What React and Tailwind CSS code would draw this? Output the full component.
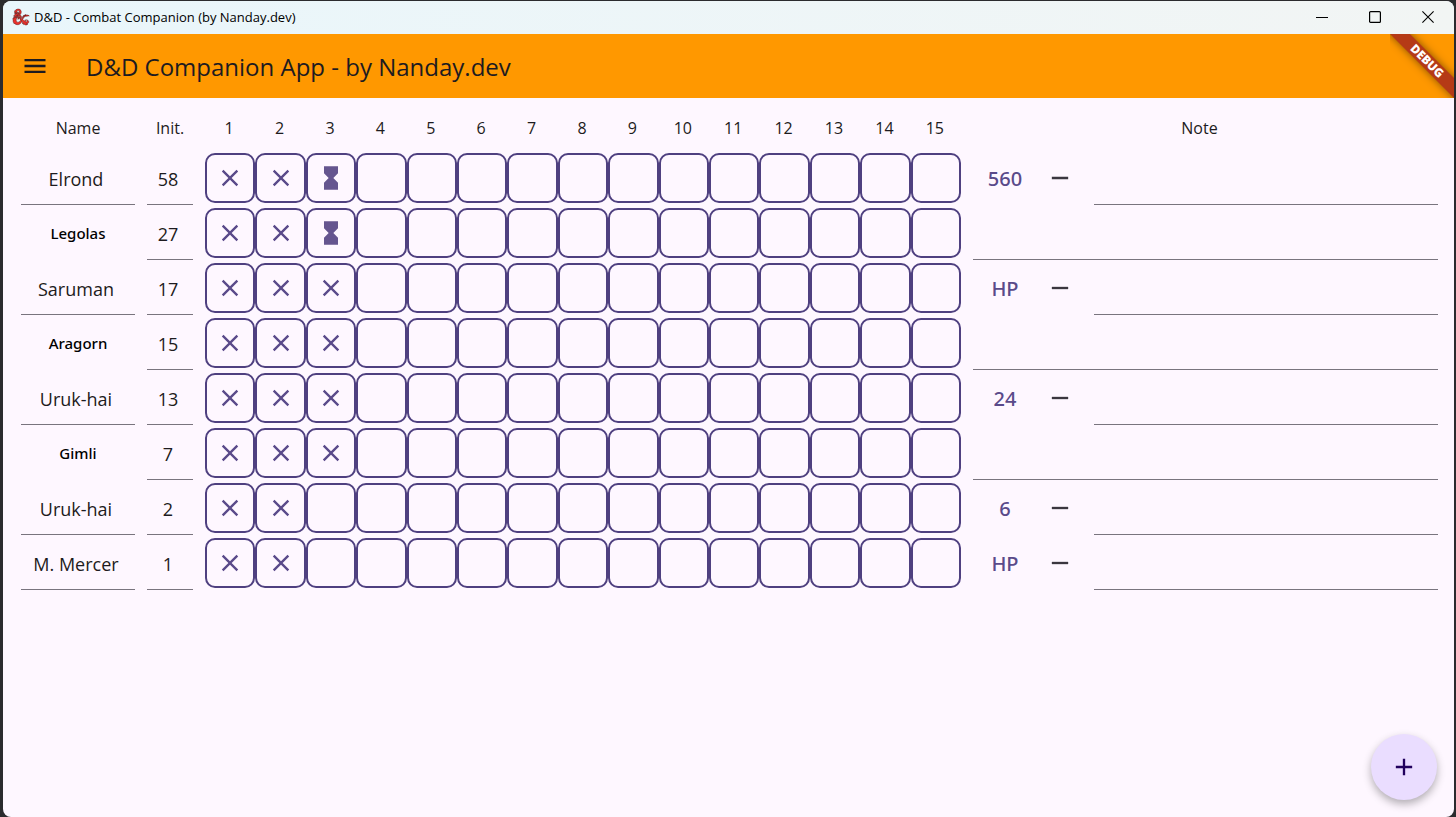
import { useState } from "react";
import { FaDAndD } from "react-icons/fa6";
import { MdAdd, MdClose, MdHourglassFull, MdMenu, MdRemove } from "react-icons/md";

const ROUNDS = Array.from({ length: 15 }, (_, i) => i + 1);
const COLUMNS = "grid grid-cols-[1260fr_580fr_repeat(15,504fr)_1330fr_3440fr]";

const FIGHTERS = [
  { name: "Elrond", init: 58, marks: ["x", "x", "wait"], hp: "560" },
  { name: "Legolas", init: 27, marks: ["x", "x", "wait"], hero: true },
  { name: "Saruman", init: 17, marks: ["x", "x", "x"], hp: "HP" },
  { name: "Aragorn", init: 15, marks: ["x", "x", "x"], hero: true },
  { name: "Uruk-hai", init: 13, marks: ["x", "x", "x"], hp: "24" },
  { name: "Gimli", init: 7, marks: ["x", "x", "x"], hero: true },
  { name: "Uruk-hai", init: 2, marks: ["x", "x"], hp: "6" },
  { name: "M. Mercer", init: 1, marks: ["x", "x"], hp: "HP" },
];

const NEXT_MARK = { "": "x", x: "wait", wait: "" };

function TitleBar() {
  return (
    <div className="flex h-[33px] items-center justify-between bg-linear-to-r from-[#e9f6fb] to-[#f2f5f4] pl-[9px] text-black">
      <div className="flex items-center gap-1 pb-[2px]">
        <FaDAndD className="size-[18px] overflow-visible fill-[#e8302c] stroke-[#5a1414] stroke-[14]" />
        <span className="text-[13px] leading-4">D&amp;D - Combat Companion (by Nanday.dev)</span>
      </div>
      <div className="flex h-full pb-[2px]">
        <button aria-label="Minimize" className="grid w-[53px] place-items-center">
          <svg className="size-3" viewBox="0 0 12 12" fill="none" stroke="currentColor">
            <path d="M0 6.5h12" />
          </svg>
        </button>
        <button aria-label="Maximize" className="grid w-[53px] place-items-center">
          <svg className="size-3" viewBox="0 0 12 12" fill="none" stroke="currentColor" strokeWidth="1.2">
            <rect x="0.6" y="0.6" width="10.8" height="10.8" rx="1" />
          </svg>
        </button>
        <button aria-label="Close" className="grid w-[53px] place-items-center">
          <svg className="size-3" viewBox="0 0 12 12" fill="none" stroke="currentColor" strokeWidth="1.1">
            <path d="M0.4 0.4l11.2 11.2M11.6 0.4L0.4 11.6" />
          </svg>
        </button>
      </div>
    </div>
  );
}

function AppBar() {
  return (
    <header className="relative flex h-16 items-center gap-[37px] bg-[#ff9800] pl-[18px] text-[#1d1b20]">
      <button aria-label="Open menu">
        <MdMenu className="size-7" />
      </button>
      <h1 className="pt-[2px] text-[24px] leading-8">D&amp;D Companion App - by Nanday.dev</h1>
      <div className="absolute top-0 right-0 size-16 overflow-hidden">
        <div className="absolute top-5 -left-[13px] h-[14px] w-[100px] rotate-45 bg-[#b53a16] text-center text-[12px] leading-[14px] font-black text-white shadow-[0_0_8px_rgba(0,0,0,0.5)]">
          DEBUG
        </div>
      </div>
    </header>
  );
}

function RoundCell({ fighter, round, initial }) {
  const [mark, setMark] = useState(initial);
  return (
    <button
      aria-label={`${fighter}, round ${round}`}
      onClick={() => setMark(NEXT_MARK[mark])}
      className="grid h-[50px] w-full place-items-center rounded-[10px] border-2 border-[#4f4080] text-[#5a4a8a]"
    >
      {mark === "x" && <MdClose className="size-7" />}
      {mark === "wait" && <MdHourglassFull className="size-7 text-[#65558f]" />}
    </button>
  );
}

const FIELD = "h-[55px] w-full min-w-0 border-b border-[#79747e] bg-transparent text-[18px] text-[#1d1b20] outline-none";

function FighterRow({ name, init, marks, hp, hero }) {
  return (
    <tr className={COLUMNS}>
      <td className="min-w-0 pr-3">
        {hero ? (
          <span className="flex h-[55px] items-center justify-center pt-[2px] font-['Noto_Sans',sans-serif] text-[15px] font-medium text-black">{name}</span>
        ) : (
          <input aria-label="Name" defaultValue={name} className={`${FIELD} pt-1 pr-1 text-center`} />
        )}
      </td>
      <td className="min-w-0 pr-3">
        <input aria-label={`${name} initiative`} defaultValue={init} className={`${FIELD} pt-1 pr-1 text-center`} />
      </td>
      {ROUNDS.map((round, i) => (
        <td key={round} className="min-w-0 pt-[3px]">
          <RoundCell fighter={name} round={round} initial={marks[i] || ""} />
        </td>
      ))}
      {!hero && (
        <td className="flex min-w-0 items-center pl-3">
          <button className="h-10 w-16 pt-[2px] font-['Noto_Sans',sans-serif] text-[20px] font-medium text-[#5a4a8a]">{hp}</button>
          <button aria-label={`Reduce ${name} hit points`} className="grid h-10 w-[46px] place-items-center text-[#3a363f]">
            <MdRemove className="size-7" />
          </button>
        </td>
      )}
      <td className={hero ? "col-span-2 min-w-0 pl-3" : "min-w-0"}>
        <input aria-label={`${name} note`} className={FIELD} />
      </td>
    </tr>
  );
}

export default function App() {
  return (
    <div className="flex min-h-screen flex-col bg-[#2b2b2e] pt-px pr-[2px] pl-[3px] font-['Open_Sans','Noto_Sans',sans-serif]">
      <div className="relative flex flex-1 flex-col overflow-hidden rounded-lg bg-[#fef7ff]">
        <TitleBar />
        <AppBar />
        <main className="flex-1 pr-4 pb-24 pl-[18px]">
          <table className="block w-full">
            <thead className="block">
              <tr className={`${COLUMNS} h-[52px] items-center pt-2 text-[16px] text-[#1d1b20]`}>
                <th className="pr-3 font-normal">Name</th>
                <th className="pr-3 font-normal">Init.</th>
                {ROUNDS.map((round) => (
                  <th key={round} className="pr-[2px] font-normal">{round}</th>
                ))}
                <th className="col-span-2 font-normal">Note</th>
              </tr>
            </thead>
            <tbody className="block">
              {FIGHTERS.map((fighter, i) => (
                <FighterRow key={i} {...fighter} />
              ))}
            </tbody>
          </table>
        </main>
        <button
          aria-label="Add fighter"
          className="absolute right-[17px] bottom-[17px] grid size-[66px] place-items-center rounded-full bg-[#eaddff] text-[#21005d] shadow-[0_4px_8px_rgba(0,0,0,0.3)]"
        >
          <MdAdd className="size-7" />
        </button>
      </div>
    </div>
  );
}
